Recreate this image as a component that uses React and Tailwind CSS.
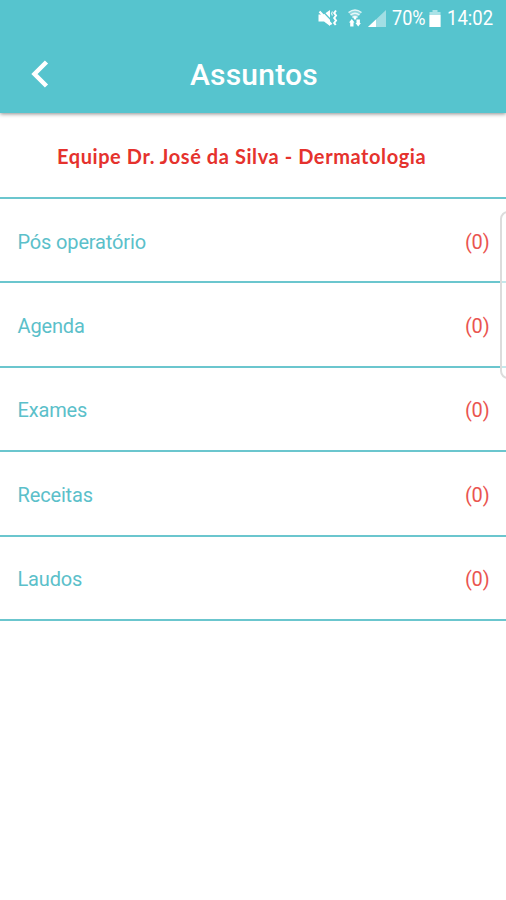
const SUBJECTS = [
  { name: 'Pós operatório', count: 0 },
  { name: 'Agenda', count: 0 },
  { name: 'Exames', count: 0 },
  { name: 'Receitas', count: 0 },
  { name: 'Laudos', count: 0 },
];

// Speaker with a slash and the vibration zigzag
function MutedIcon() {
  return (
    <svg width="20" height="18" viewBox="0 0 20 18" fill="none">
      <path d="M0.500 5.500h5L12 1v16l-6-4.500H0.500z" fill="#fff" />
      <path d="M4 1.500L14 12" stroke="#56c4ce" strokeWidth="1.200" />
      <path d="M1.500 2.500L13.500 15.500" stroke="#fff" strokeWidth="2.200" />
      <path d="M14.500 2.500l-1 2 1 2" stroke="#fff" strokeOpacity="0.800" strokeWidth="1.200" />
      <path d="M18 1.500l-1.800 2.500 1.800 2.500-1.800 2.500 1.800 2.500-1.800 2.500 1.500 2" stroke="#fff" strokeWidth="2" />
    </svg>
  );
}

// Wi-Fi waves above the two traffic arrows
function WifiIcon() {
  return (
    <svg width="14" height="18" viewBox="0 0 14 18" fill="none">
      <path d="M0.500 3.500Q7 -1.500 13.500 3.500L7 11z" fill="#fff" fillOpacity="0.350" />
      <path d="M0.500 3.500Q7 -1.500 13.500 3.500M2.500 6Q7 2.500 11.500 6M4.500 8.500Q7 6.500 9.500 8.500" stroke="#fff" strokeOpacity="0.800" strokeWidth="1.300" />
      <path d="M7 7l1.500 2L7 11 5.500 9z" fill="#fff" />
      <path d="M1 13.500L3.800 10l2.700 3.500H5.500V17.500H2.200v-4z" fill="#fff" />
      <path d="M7.500 14L10.200 17.500l2.700-3.500h-1V10.500H8.500V14z" fill="#fff" />
    </svg>
  );
}

function SignalIcon() {
  return (
    <svg width="18" height="17" viewBox="0 0 18 17">
      <path d="M0 17L18 0v17z" fill="#fff" fillOpacity="0.450" />
      <path d="M0 17l8-7.500V17z" fill="#fff" />
    </svg>
  );
}

function BatteryIcon() {
  return (
    <svg width="12" height="17" viewBox="0 0 12 17">
      <path d="M3.500 0h5v2H11.500v15H0.500V2h3z" fill="#fff" fillOpacity="0.500" />
      <path d="M0.500 5h11v12H0.500z" fill="#fff" />
    </svg>
  );
}

function StatusBar() {
  return (
    <div className="flex h-9 items-center pl-[318px] text-[21px] leading-none text-white">
      <MutedIcon />
      <span className="ml-[10px]"><WifiIcon /></span>
      <span className="ml-[6px]"><SignalIcon /></span>
      <span className="ml-[6px] w-[35px] origin-left scale-x-[0.860] whitespace-nowrap">70%</span>
      <span className="ml-[2px]"><BatteryIcon /></span>
      <span className="ml-[6px] origin-left scale-x-[0.880] whitespace-nowrap">14:02</span>
    </div>
  );
}

function Header() {
  return (
    <header className="h-[113px] bg-[#56c4ce] shadow-[0_1px_4px_rgba(0,0,0,0.45)]">
      <StatusBar />
      <div className="flex h-[77px] items-center">
        <button aria-label="Voltar" className="w-[190px] pb-[2px] pl-[31px]">
          <svg width="19" height="28" viewBox="0 0 19 28" fill="none">
            <path d="M15.500 2L3.500 14l12 12" stroke="#fff" strokeWidth="4.500" />
          </svg>
        </button>
        <h1 className="whitespace-nowrap text-[30px] font-medium leading-none tracking-[0.2px] text-white">Assuntos</h1>
      </div>
    </header>
  );
}

export default function App() {
  return (
    <div className="relative h-[900px] w-[506px] overflow-hidden bg-white font-['Roboto',sans-serif]">
      <Header />
      <main>
        <div className="flex h-[86px] items-center border-b-2 border-[#6bc6ce] pl-[57px] pt-[2px]">
          <h2 className="whitespace-nowrap font-['Lato',sans-serif] text-[20px] font-bold tracking-[0.58px] text-[#e5322d]">
            Equipe Dr. José da Silva - Dermatologia
          </h2>
        </div>
        <ul>
          {SUBJECTS.map((subject) => (
            <li
              key={subject.name}
              className="flex h-[84.4px] items-center justify-between border-b-2 border-[#6bc6ce] pl-[17.5px] pr-[16.5px] pt-[3px] text-[20px] tracking-[-0.15px]"
            >
              <span className="text-[#5bc0ca]">{subject.name}</span>
              <span className="text-[#ea5550]">({subject.count})</span>
            </li>
          ))}
        </ul>
      </main>

      {/* Edge panel handle, lies over the list */}
      <div className="absolute -right-[10px] top-[211px] h-[168px] w-[16px] rounded-[8px] border-2 border-[#dcdcdc] bg-white/60" />
    </div>
  );
}
